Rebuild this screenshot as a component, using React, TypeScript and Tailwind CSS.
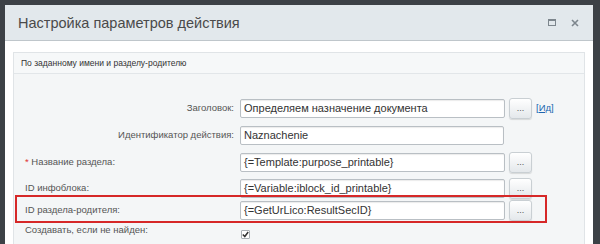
import React from "react";

const font = { fontFamily: '"Liberation Sans", Arial, sans-serif' };

function Btn() {
  return (
    <div className="w-[23px] h-[21px] rounded-[3px] border border-[#c9cfd3] bg-gradient-to-b from-[#ffffff] to-[#e4e8eb] flex items-center justify-center text-[9px] text-[#555] leading-none shadow-[0_1px_1px_rgba(0,0,0,0.12)]">
      ...
    </div>
  );
}

function Input({ value, w = 265 }: { value: string; w?: number }) {
  return (
    <div
      className="h-[19px] shrink-0 border border-[#b9bfc4] rounded-[2px] bg-white flex items-center px-[3px] text-[11px] text-[#333] shadow-[inset_0_1px_1px_rgba(0,0,0,0.08)]"
      style={{ width: w }}
    >
      {value}
    </div>
  );
}

export default function App() {
  return (
    <div className="w-[600px] h-[244px] bg-[#3c4146] pt-[5px] pl-[5px] pr-[7px] overflow-hidden" style={font}>
      <div className="h-full bg-white flex flex-col">
        <div className="h-[36px] shrink-0 bg-[#e2e8ec] border-b border-[#bfc6cb] flex items-center pl-[13px] pr-[14px]">
          <div className="text-[14.5px] text-[#4a4a4a] flex-1 pt-[2px]">Настройка параметров действия</div>
          <div className="w-[8px] h-[7px] border border-[#7d868d] border-t-2 mr-[15px]" />
          <svg width="8" height="8" viewBox="0 0 8 8">
            <path d="M1 1L7 7M7 1L1 7" stroke="#7d868d" strokeWidth="1.6" />
          </svg>
        </div>
        <div className="flex-1 pt-[11px] px-[8px] bg-white">
          <div className="h-full bg-[#f4f6f7] border border-[#e0e4e7] border-b-0">
            <div className="h-[21px] border-b border-[#e2e6e9] flex items-center pl-[7px] text-[8.5px] text-[#333] bg-[#f6f8f9]">
              По заданному имени и разделу-родителю
            </div>
            <div className="flex flex-col pt-[20px] text-[9.5px] text-[#555]">
              <div className="flex items-center h-[28px]">
                <div className="w-[226px] text-right pr-[6px]">Заголовок:</div>
                <Input value="Определяем назначение документа" />
                <div className="ml-[4px]"><Btn /></div>
                <div className="ml-[4px] text-[9.5px] text-[#2067b0]">
                  [<span className="underline">Ид</span>]
                </div>
              </div>
              <div className="flex items-center h-[27px]">
                <div className="w-[226px] text-right pr-[6px]">Идентификатор действия:</div>
                <Input value="Naznachenie" w={264} />
              </div>
              <div className="flex items-center h-[27px]">
                <div className="w-[226px] pl-[11px]">
                  <span className="text-[#d33]">*</span> Название раздела:
                </div>
                <Input value="{=Template:purpose_printable}" />
                <div className="ml-[4px]"><Btn /></div>
              </div>
              <div className="flex items-center h-[24px]">
                <div className="w-[226px] pl-[11px]">ID инфоблока:</div>
                <Input value="{=Variable:iblock_id_printable}" />
                <div className="ml-[4px]"><Btn /></div>
              </div>
              <div className="flex items-center h-[20px] relative">
                <div className="absolute left-[1px] top-[-5px] w-[532px] h-[28px] border-2 border-[#d62828]" />
                <div className="w-[226px] pl-[11px]">ID раздела-родителя:</div>
                <Input value="{=GetUrLico:ResultSecID}" />
                <div className="ml-[4px]"><Btn /></div>
              </div>
              <div className="flex items-center h-[20px]">
                <div className="w-[226px] pl-[11px]">Создавать, если не найден:</div>
                <div className="w-[9px] h-[9px] ml-[1px] mt-[8px] border border-[#a9afb4] bg-white rounded-[1px] flex items-center justify-center">
                  <svg width="7" height="7" viewBox="0 0 7 7">
                    <path d="M0.8 3.5L2.8 5.5L6.2 1" stroke="#333" strokeWidth="1.5" fill="none" />
                  </svg>
                </div>
              </div>
            </div>
          </div>
        </div>
      </div>
    </div>
  );
}
